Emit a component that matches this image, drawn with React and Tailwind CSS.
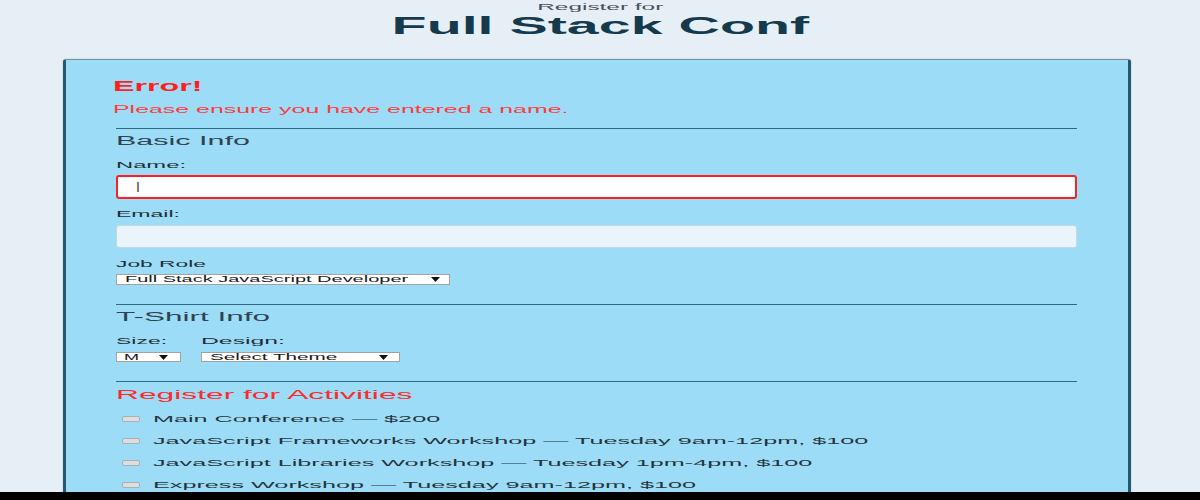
import React from 'react';

// the reference is a horizontally stretched capture, so text runs are widened with scale-x
const Wide = ({ className = '', children }) => (
  <span className={`inline-block origin-left whitespace-nowrap ${className}`}>{children}</span>
);

const Arrow = () => (
  <svg width="9" height="5" viewBox="0 0 9 5" className="shrink-0">
    <polygon points="0,0 9,0 4.5,5" fill="#111" />
  </svg>
);

const Rule = ({ className = '' }) => <div className={`h-px bg-[#2f6980] ${className}`} />;

const activities = [
  { label: 'Main Conference — $200' },
  { label: 'JavaScript Frameworks Workshop — Tuesday 9am-12pm, $100' },
  { label: 'JavaScript Libraries Workshop — Tuesday 1pm-4pm, $100' },
  { label: 'Express Workshop — Tuesday 9am-12pm, $100' },
];

export default function App() {
  return (
    <div className="flex h-[500px] flex-col overflow-hidden bg-[#e7eff6] font-['Liberation_Sans',Arial,sans-serif]">
      <div className="flex-1 overflow-hidden">
        {/* Header */}
        <header className="pt-[2px] text-center">
          <div className="text-[9px] leading-[11px] text-[#44525c]">
            <span className="inline-block scale-x-[2.71]">Register for</span>
          </div>
          <h1 className="text-[24px] font-bold leading-[26px] text-[#163a4d]">
            <span className="inline-block scale-x-[2.39]">Full Stack Conf</span>
          </h1>
        </header>

        {/* Form card */}
        <div className="mt-[20px] ml-[63px] w-[1068px] rounded-t-[3px] border-x-[3px] border-t border-[#22596f] border-t-[#7193a3] bg-[#9ddcf6] pt-[18px] pr-[51px] pl-[50px] shadow-[0_0_2px_rgba(0,0,0,0.2)]">
          <div className="-ml-[3px] text-[#ff1f1f]">
            <div className="text-[14px] font-bold leading-[16px]">
              <Wide className="scale-x-[2.3]">Error!</Wide>
            </div>
            <div className="mt-[10px] text-[10px] leading-[12px] text-[#ff3b3b]">
              <Wide className="scale-x-[2.49]">Please ensure you have entered a name.</Wide>
            </div>
          </div>

          <Rule className="mt-[12px]" />

          {/* Basic Info */}
          <div className="mt-[4px] text-[12.5px] leading-[16px] text-[#2e4350]">
            <Wide className="scale-x-[2.44]">Basic Info</Wide>
          </div>
          <label className="mt-[10px] block text-[9px] leading-[12px] text-[#1f2e36]">
            <Wide className="scale-x-[2.64]">Name:</Wide>
          </label>
          <input
            readOnly
            value="I"
            className="mt-[4px] block h-[24px] w-full rounded-[3px] border-2 border-[#ff1f1f] bg-white pl-[18px] text-[14px] text-[#444] outline-none"
          />
          <label className="mt-[9px] block text-[9px] leading-[12px] text-[#1f2e36]">
            <Wide className="scale-x-[2.56]">Email:</Wide>
          </label>
          <input
            readOnly
            className="mt-[5px] block h-[23px] w-full rounded-[3px] border border-[#c3d8e3] bg-[#e9f5fb] outline-none"
          />
          <label className="mt-[10px] block text-[9px] leading-[12px] text-[#1f2e36]">
            <Wide className="scale-x-[2.53]">Job Role</Wide>
          </label>
          <div className="mt-[4px] flex h-[11px] w-[334px] items-center justify-between border border-[#a3a3a3] bg-white pr-[9px] pl-[8px]">
            <Wide className="scale-x-[2.22] text-[9px] leading-[9px] text-[#1a1a1a]">
              Full Stack JavaScript Developer
            </Wide>
            <Arrow />
          </div>

          <Rule className="mt-[19px]" />

          {/* T-Shirt Info */}
          <div className="mt-[4px] text-[12.5px] leading-[16px] text-[#2e4350]">
            <Wide className="scale-x-[2.52]">T-Shirt Info</Wide>
          </div>
          <div className="mt-[10px] flex">
            <div className="w-[85px]">
              <label className="block text-[9px] leading-[12px] text-[#1f2e36]">
                <Wide className="scale-x-[2.55]">Size:</Wide>
              </label>
              <div className="mt-[5px] flex h-[10px] w-[65px] items-center justify-between border border-[#a3a3a3] bg-white pr-[12px] pl-[7px]">
                <Wide className="scale-x-[2] text-[9px] leading-[9px] text-[#1a1a1a]">M</Wide>
                <Arrow />
              </div>
            </div>
            <div>
              <label className="block text-[9px] leading-[12px] text-[#1f2e36]">
                <Wide className="scale-x-[2.75]">Design:</Wide>
              </label>
              <div className="mt-[5px] flex h-[10px] w-[199px] items-center justify-between border border-[#a3a3a3] bg-white pr-[11px] pl-[8px]">
                <Wide className="scale-x-[2.3] text-[9px] leading-[9px] text-[#1a1a1a]">Select Theme</Wide>
                <Arrow />
              </div>
            </div>
          </div>

          <Rule className="mt-[19px]" />

          {/* Activities */}
          <div className="mt-[5px] text-[12.5px] leading-[16px] text-[#ff2a2a]">
            <Wide className="scale-x-[2.54]">Register for Activities</Wide>
          </div>
          <div className="mt-[5px]">
            {activities.map((item) => (
              <div key={item.label} className="flex h-[22px] items-center">
                <span className="ml-[6px] h-[6px] w-[18px] shrink-0 rounded-[2px] border border-[#a8b0b4] bg-[#dcdfe0]" />
                <Wide className="ml-[13px] scale-x-[2.8] text-[9px] leading-[12px] text-[#24343e]">
                  {item.label}
                </Wide>
              </div>
            ))}
          </div>
        </div>
      </div>
      <div className="h-[8px] shrink-0 bg-black" />
    </div>
  );
}
